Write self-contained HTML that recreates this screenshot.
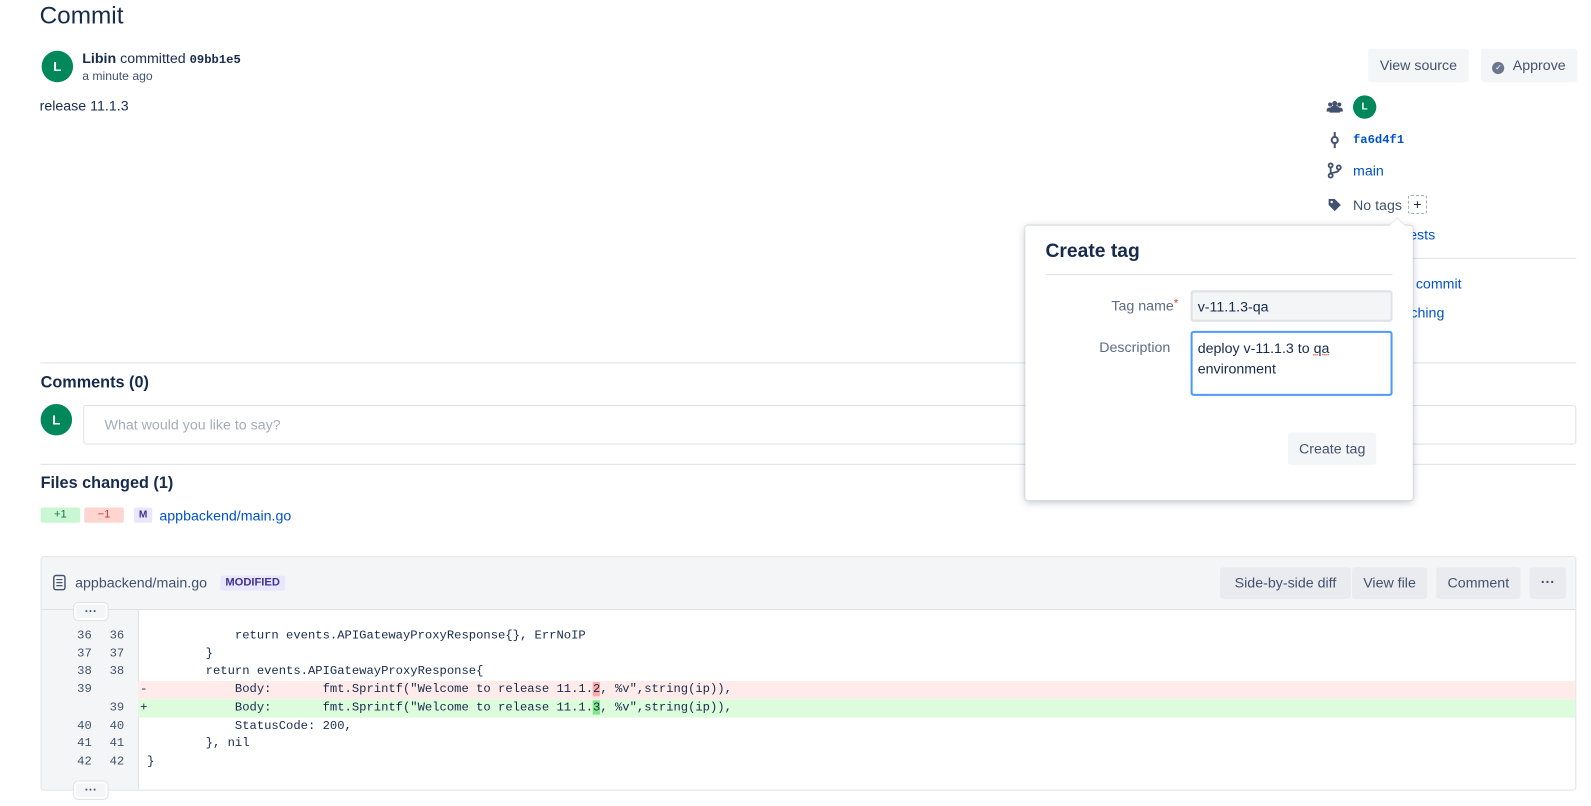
<!DOCTYPE html>
<html><head><meta charset="utf-8"><style>
*{box-sizing:border-box;margin:0;padding:0}
body{width:1591px;height:806px;background:#fff;font-family:"Liberation Sans",sans-serif;color:#172b4d;font-size:14px;position:relative;overflow:hidden}
#w{position:absolute;left:0;top:0;width:1568px;height:794px;transform:scale(1.015);transform-origin:0 0}
.a{position:absolute;white-space:nowrap}
.av{position:absolute;border-radius:50%;background:#00875a;color:#fff;font-weight:bold;text-align:center}
.btn{position:absolute;background:#f4f5f7;border-radius:3px;color:#42526e;font-size:14px;text-align:center}
.hb{background:#e9ebef}
.link{color:#0052cc}
.mono{font-family:"Liberation Mono",monospace}
.code{position:absolute;left:40px;font-family:"Liberation Mono",monospace;font-size:12px;height:17.7px;line-height:17.7px;width:1512px;white-space:pre}
.code .n1{position:absolute;left:36px;width:14px;text-align:right;color:#42526e}
.code .n2{position:absolute;left:68px;width:14px;text-align:right;color:#42526e}
.code .t{position:absolute;left:105px;color:#172b4d}
.code .s{position:absolute;left:98px;color:#172b4d}
.hr{position:absolute;height:1px;background:#dfe1e6}
</style></head><body><div id="w">
<div class="a" style="left:39px;top:2px;font-size:24px;">Commit</div>
<div class="av" style="left:41px;top:50px;width:31px;height:31px;line-height:31px;font-size:13px">L</div>
<div class="a" style="left:81px;top:49px;font-size:14px"><b>Libin</b> committed <b class="mono" style="font-size:12px">09bb1e5</b></div>
<div class="a" style="left:81px;top:68px;font-size:12px;color:#42526e">a minute ago</div>
<div class="a" style="left:39px;top:96px;font-size:14px">release 11.1.3</div>

<div class="btn" style="left:1348px;top:48px;width:99px;height:33px;line-height:33px">View source</div>
<div class="btn" style="left:1459px;top:48px;width:95px;height:33px;line-height:33px"><span style="display:inline-block;width:12px;height:12px;border-radius:50%;background:#6b778c;vertical-align:0px;margin-right:8px;color:#fff;font-size:8px;line-height:12px">✓</span>Approve</div>

<svg class="a" style="left:1307px;top:98px" width="16" height="14" viewBox="0 0 16 14"><circle cx="8" cy="4" r="2.5" fill="#42526e"/><circle cx="3.5" cy="5" r="2" fill="#42526e"/><circle cx="12.5" cy="5" r="2" fill="#42526e"/><path d="M3 13v-3a5 4 0 0 1 10 0v3z" fill="#42526e"/><path d="M0 12v-2a3 3 0 0 1 3-2h1v4zM16 12v-2a3 3 0 0 0-3-2h-1v4z" fill="#42526e"/></svg>
<div class="av" style="left:1333px;top:94px;width:23px;height:23px;line-height:23px;font-size:10px">L</div>
<svg class="a" style="left:1310px;top:130px" width="10" height="16" viewBox="0 0 10 16"><path d="M5 0v16" stroke="#42526e" stroke-width="2"/><circle cx="5" cy="8" r="3" fill="#fff" stroke="#42526e" stroke-width="2"/></svg>
<div class="a mono link" style="left:1333px;top:131px;font-size:12px;font-weight:bold">fa6d4f1</div>
<svg class="a" style="left:1308px;top:160px" width="14" height="16" viewBox="0 0 14 16"><circle cx="3" cy="3" r="2" fill="none" stroke="#42526e" stroke-width="1.8"/><circle cx="3" cy="13" r="2" fill="none" stroke="#42526e" stroke-width="1.8"/><circle cx="11" cy="5" r="2" fill="none" stroke="#42526e" stroke-width="1.8"/><path d="M3 5v6M11 7c0 4-8 2-8 5" fill="none" stroke="#42526e" stroke-width="1.8"/></svg>
<div class="a link" style="left:1333px;top:160px">main</div>
<svg class="a" style="left:1308px;top:195px" width="14" height="14" viewBox="0 0 14 14"><path d="M1 1h6l6 6-6 6-6-6z" fill="#42526e"/><circle cx="4" cy="4" r="1.2" fill="#fff"/></svg>
<div class="a" style="left:1333px;top:194px;color:#42526e">No tags</div>
<div class="a" style="left:1387px;top:192px;width:19px;height:19px;border:1px dashed #97a0af;border-radius:3px;text-align:center;line-height:17px;font-size:14px">+</div>
<div class="a link" style="right:154px;top:223px">Pull requests</div>
<div class="hr" style="left:1300px;top:254px;width:253px"></div>
<div class="a link" style="right:128px;top:271px">Revert commit</div>
<div class="a link" style="right:145px;top:300px">Check branching</div>

<div class="hr" style="left:40px;top:357px;width:1513px"></div>
<div class="a" style="left:40px;top:369px;font-size:16px;font-weight:bold">Comments (0)</div>
<div class="av" style="left:40px;top:398px;width:31px;height:31px;line-height:31px;font-size:13px">L</div>
<div class="a" style="left:82px;top:399px;width:1471px;height:39px;border:1px solid #dfe1e6;border-radius:3px;padding-left:20px;line-height:37px;color:#a5adba">What would you like to say?</div>
<div class="hr" style="left:40px;top:457px;width:1513px"></div>
<div class="a" style="left:40px;top:468px;font-size:16px;font-weight:bold">Files changed (1)</div>
<div class="a" style="left:40px;top:500px;width:39px;height:15px;background:#c9f7d4;color:#216e4e;font-size:11px;text-align:center;line-height:15px;border-radius:2px">+1</div>
<div class="a" style="left:83px;top:500px;width:39px;height:15px;background:#ffd5d2;color:#c9372c;font-size:11px;text-align:center;line-height:15px;border-radius:2px">−1</div>
<div class="a" style="left:132px;top:500px;width:18px;height:15px;background:#eae6ff;color:#403294;font-size:10px;font-weight:bold;text-align:center;line-height:15px;border-radius:2px">M</div>
<div class="a link" style="left:157px;top:500px">appbackend/main.go</div>

<div class="a" style="left:40px;top:548px;width:1513px;height:231px;border:1px solid #dfe1e6;border-radius:3px;overflow:hidden">
 <div style="position:absolute;left:0;top:0;width:100%;height:52px;background:#f4f5f7;border-bottom:1px solid #dfe1e6"></div>
 <div style="position:absolute;left:0;top:52px;width:96px;height:180px;background:#f4f5f7;border-right:1px solid #dfe1e6"></div>
</div>
<svg class="a" style="left:52px;top:566px" width="13" height="16" viewBox="0 0 13 16"><rect x="1" y="1" width="11" height="14" rx="2" fill="none" stroke="#42526e" stroke-width="1.4"/><path d="M3.5 5h6M3.5 8h6M3.5 11h6" stroke="#42526e" stroke-width="1.2"/></svg>
<div class="a" style="left:74px;top:566px;color:#42526e">appbackend/main.go</div>
<div class="a" style="left:217px;top:567px;background:#eae6ff;color:#403294;font-size:11px;font-weight:bold;padding:0 5px;height:15px;line-height:15px;border-radius:3px">MODIFIED</div>
<div class="btn hb" style="left:1202px;top:559px;width:129px;height:31px;line-height:31px">Side-by-side diff</div>
<div class="btn hb" style="left:1332px;top:559px;width:74px;height:31px;line-height:31px">View file</div>
<div class="btn hb" style="left:1415px;top:559px;width:83px;height:31px;line-height:31px">Comment</div>
<div class="btn hb" style="left:1507px;top:559px;width:36px;height:31px;line-height:29px;font-weight:bold">···</div>
<div class="a" style="left:73px;top:594px;width:33px;height:17px;background:#f4f5f7;border:2px solid #fff;outline:1px solid #dfe1e6;border-radius:4px;text-align:center;font-size:12px;line-height:12px;color:#42526e;font-weight:bold">···</div>
<div class="a" style="left:73px;top:770px;width:33px;height:17px;background:#f4f5f7;border:2px solid #fff;outline:1px solid #dfe1e6;border-radius:4px;text-align:center;font-size:12px;line-height:12px;color:#42526e;font-weight:bold">···</div>

<div class="code" style="top:618px"><span class="n1">36</span><span class="n2">36</span><span class="t">            return events.APIGatewayProxyResponse{}, ErrNoIP</span></div>
<div class="code" style="top:636px"><span class="n1">37</span><span class="n2">37</span><span class="t">        }</span></div>
<div class="code" style="top:653px"><span class="n1">38</span><span class="n2">38</span><span class="t">        return events.APIGatewayProxyResponse{</span></div>
<div class="code" style="top:671px"><div style="position:absolute;left:96px;width:1416px;height:100%;background:#ffebe9"></div><span class="n1">39</span><span class="s">-</span><span class="t">            Body:       fmt.Sprintf("Welcome to release 11.1.<span style="background:#ffaba8">2</span>, %v",string(ip)),</span></div>
<div class="code" style="top:689px"><div style="position:absolute;left:96px;width:1416px;height:100%;background:#dcfcdc"></div><span class="n2">39</span><span class="s">+</span><span class="t">            Body:       fmt.Sprintf("Welcome to release 11.1.<span style="background:#7ee787">3</span>, %v",string(ip)),</span></div>
<div class="code" style="top:707px"><span class="n1">40</span><span class="n2">40</span><span class="t">            StatusCode: 200,</span></div>
<div class="code" style="top:724px"><span class="n1">41</span><span class="n2">41</span><span class="t">        }, nil</span></div>
<div class="code" style="top:742px"><span class="n1">42</span><span class="n2">42</span><span class="t">}</span></div>

<div class="a" style="left:1010px;top:222px;width:382px;height:271px;background:#fff;border-radius:3px;box-shadow:0 2px 8px rgba(9,30,66,.25),0 0 1px rgba(9,30,66,.3)"></div>
<div class="a" style="left:1371px;top:216px;width:11px;height:11px;background:#fff;transform:rotate(45deg);border-left:1px solid #e4e6ea;border-top:1px solid #e4e6ea"></div>
<div class="a" style="left:1030px;top:237px;font-size:19px;font-weight:bold">Create tag</div>
<div class="hr" style="left:1030px;top:270px;width:342px"></div>
<div class="a" style="left:1095px;top:293px;color:#5e6c84">Tag name<span style="color:#de350b;font-size:11px;vertical-align:4px">*</span></div>
<div class="a" style="left:1173px;top:286px;width:199px;height:31px;background:#f4f5f7;border:2px solid #dfe1e6;border-radius:3px;padding:6px 5px;font-size:14px">v-11.1.3-qa</div>
<div class="a" style="left:1083px;top:334px;color:#5e6c84">Description</div>
<div class="a" style="left:1173px;top:326px;width:199px;height:64px;background:#fff;border:2px solid #4c9aff;border-radius:3px;padding:5px 5px;font-size:14px;line-height:20px;white-space:normal">deploy v-11.1.3 to <span style="text-decoration:underline dotted #de350b">qa</span> environment</div>
<div class="btn" style="left:1269px;top:426px;width:87px;height:32px;line-height:32px">Create tag</div>
</div></body></html>
